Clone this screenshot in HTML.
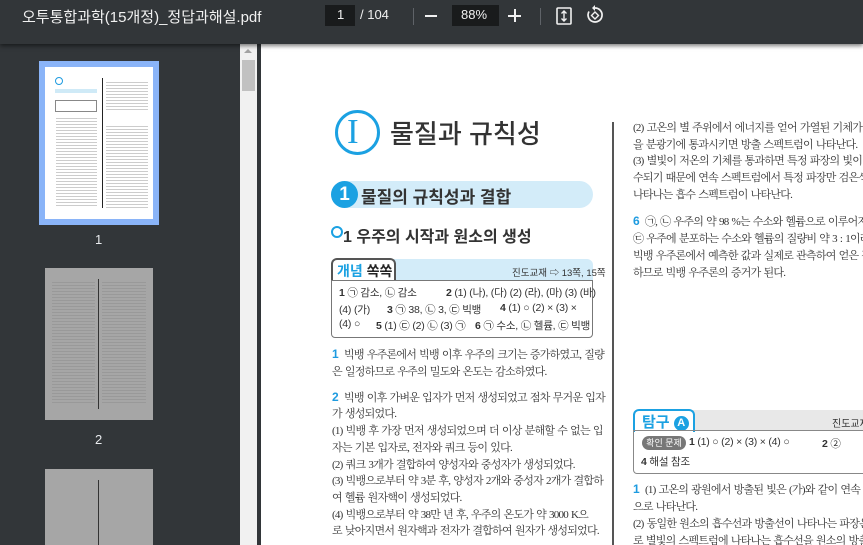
<!DOCTYPE html>
<html><head><meta charset="utf-8"><style>
*{margin:0;padding:0;box-sizing:border-box}
html,body{width:863px;height:545px;overflow:hidden}
body{background:#323639;font-family:"Liberation Sans","Noto Sans CJK KR",sans-serif;position:relative}
.a{position:absolute;white-space:nowrap}
#tb{position:absolute;left:0;top:0;width:863px;height:44px;background:#323639;box-shadow:0 2px 4px rgba(0,0,0,.5);z-index:3;color:#f1f1f1}
.pg{position:absolute;left:261px;top:44px;width:602px;height:501px;background:#fff}
.s{font-family:"Liberation Serif","Noto Serif CJK KR",serif;font-size:11px;color:#333;letter-spacing:-0.75px;word-spacing:1px}
.b{color:#1e9be0;font-family:"Liberation Sans","Noto Sans CJK KR",sans-serif;font-weight:bold;font-size:12px}
.k{font-family:"Liberation Sans","Noto Sans CJK KR",sans-serif;font-size:10.5px;color:#333;letter-spacing:-0.2px}
.thumb{position:absolute;background:#a6a6a6}
</style></head><body>
<div id="tb">
<div class="a" style="left:22px;top:6px;font-size:15px">오투통합과학(15개정)_정답과해설.pdf</div>
<div class="a" style="left:325px;top:5px;width:30px;height:21px;background:#191b1c"></div>
<div class="a" style="left:337px;top:7px;font-size:13px">1</div>
<div class="a" style="left:360px;top:7px;font-size:13px">/ 104</div>
<div class="a" style="left:413px;top:8px;width:1px;height:17px;background:#5f6368"></div>
<div class="a" style="left:425px;top:15px;width:12px;height:2px;background:#f1f1f1"></div>
<div class="a" style="left:452px;top:5px;width:47px;height:21px;background:#191b1c"></div>
<div class="a" style="left:461px;top:7px;font-size:13px">88%</div>
<div class="a" style="left:508px;top:15px;width:13px;height:2px;background:#f1f1f1"></div>
<div class="a" style="left:514px;top:9px;width:2px;height:13px;background:#f1f1f1"></div>
<div class="a" style="left:540px;top:8px;width:1px;height:17px;background:#5f6368"></div>
<svg class="a" style="left:555px;top:6px" width="18" height="20" viewBox="0 0 18 20"><rect x="2" y="2" width="14" height="16" fill="none" stroke="#f1f1f1" stroke-width="1.6" rx="1"/><path d="M9 5v10M6.5 7.5L9 5l2.5 2.5M6.5 12.5L9 15l2.5-2.5" stroke="#f1f1f1" stroke-width="1.4" fill="none"/></svg>
<svg class="a" style="left:585px;top:5px" width="20" height="20" viewBox="0 0 20 20"><path d="M10 3a7 7 0 1 1-6 3.5" stroke="#f1f1f1" stroke-width="1.7" fill="none"/><path d="M10 0v6l-3-3z" fill="#f1f1f1"/><path d="M10 7l3.5 3.5L10 14l-3.5-3.5z" stroke="#f1f1f1" stroke-width="1.4" fill="none"/></svg>
</div>
<div class="a" style="left:39px;top:61px;width:120px;height:164px;background:#8ab4f8"></div>
<div class="a" style="left:45px;top:67px;width:108px;height:152px;background:#fff"></div>
<div class="a" style="left:55px;top:77px;width:8px;height:8px;border:1.5px solid #1e9be0;border-radius:50%"></div>
<div class="a" style="left:55px;top:89px;width:42px;height:4px;background:#cfeaf7"></div>
<div class="a" style="left:55px;top:100px;width:42px;height:12px;border:1px solid #888"></div>
<div class="a" style="left:102px;top:78px;width:1px;height:130px;background:#222"></div>
<div class="a" style="left:56px;top:116px;width:41px;height:92px;background:repeating-linear-gradient(#fff 0 2px,#ccc 2px 3px)"></div>
<div class="a" style="left:106px;top:80px;width:42px;height:30px;background:repeating-linear-gradient(#fff 0 2px,#ccc 2px 3px)"></div>
<div class="a" style="left:106px;top:124px;width:42px;height:84px;background:repeating-linear-gradient(#fff 0 2px,#ccc 2px 3px)"></div>
<div class="a" style="left:95px;top:232px;color:#e8eaed;font-size:13px">1</div>
<div class="thumb" style="left:45px;top:268px;width:108px;height:152px"></div>
<div class="a" style="left:98px;top:279px;width:1px;height:130px;background:#333"></div>
<div class="a" style="left:52px;top:280px;width:43px;height:125px;background:repeating-linear-gradient(#a6a6a6 0 2px,#999 2px 3px)"></div>
<div class="a" style="left:102px;top:280px;width:44px;height:125px;background:repeating-linear-gradient(#a6a6a6 0 2px,#999 2px 3px)"></div>
<div class="a" style="left:95px;top:432px;color:#e8eaed;font-size:13px">2</div>
<div class="thumb" style="left:45px;top:469px;width:108px;height:80px"></div>
<div class="a" style="left:98px;top:480px;width:1px;height:70px;background:#333"></div>
<div class="a" style="left:240px;top:44px;width:17px;height:501px;background:#f1f1f1"></div>
<div class="a" style="left:242px;top:60px;width:13px;height:31px;background:#c1c1c1"></div>
<div class="a" style="left:244px;top:49px;width:0;height:0;border-left:4px solid transparent;border-right:4px solid transparent;border-bottom:4px solid #a3a3a3"></div>
<div class="pg"></div>
<div class="a" style="left:612px;top:122px;width:2px;height:423px;background:#555"></div>
<div class="a" style="left:335px;top:110px;width:45px;height:45px;border:3px solid #1ba1e2;border-radius:50%"></div>
<div class="a" style="left:347px;top:112px;font-family:'Liberation Serif',serif;font-size:35px;color:#1ba1e2">I</div>
<div class="a" style="left:390px;top:114px;font-size:26px;color:#333;font-weight:500">물질과 규칙성</div>
<div class="a" style="left:331px;top:181px;width:262px;height:27px;background:#d3ecf9;border-radius:14px"></div>
<div class="a" style="left:331px;top:181px;width:27px;height:27px;background:#1ba1e2;border-radius:50%;color:#fff;font-size:19px;font-weight:bold;text-align:center;line-height:27px">1</div>
<div class="a" style="left:361px;top:183px;font-size:17px;font-weight:bold;color:#333">물질의 규칙성과 결합</div>
<div class="a" style="left:331px;top:226px;width:12px;height:12px;border:2.5px solid #1ba1e2;border-radius:50%"></div>
<div class="a" style="left:343px;top:223px;font-size:16px;font-weight:bold;color:#333">1 우주의 시작과 원소의 생성</div>
<div class="a" style="left:331px;top:259px;width:262px;height:22px;background:#d3ecf9;border-radius:6px 6px 0 0"></div>
<div class="a" style="left:331px;top:258px;width:65px;height:24px;background:#fff;border:2px solid #555;border-bottom:none;border-radius:6px 6px 0 0"></div>
<div class="a" style="left:337px;top:261px;font-size:14px;font-weight:bold"><span style="color:#1ba1e2">개념</span> <span style="color:#222">쏙쏙</span></div>
<div class="a" style="left:512px;top:265px;font-size:9.5px;color:#333">진도교재 ⇨ 13쪽, 15쪽</div>
<div class="a" style="left:331px;top:280px;width:262px;height:58px;border:1.5px solid #777;border-radius:0 0 4px 4px;background:#fff"></div>
<div class="a k" style="left:339px;top:285px"><b>1</b> ㉠ 감소, ㉡ 감소</div>
<div class="a k" style="left:446px;top:285px"><b>2</b> (1) (나), (다) (2) (라), (마) (3) (바)</div>
<div class="a k" style="left:339px;top:302px">(4) (가)</div>
<div class="a k" style="left:387px;top:302px"><b>3</b> ㉠ 38, ㉡ 3, ㉢ 빅뱅</div>
<div class="a k" style="left:500px;top:302px"><b>4</b> (1) ○ (2) × (3) ×</div>
<div class="a k" style="left:339px;top:318px">(4) ○</div>
<div class="a k" style="left:376px;top:318px"><b>5</b> (1) ㉢ (2) ㉡ (3) ㉠</div>
<div class="a k" style="left:475px;top:318px"><b>6</b> ㉠ 수소, ㉡ 헬륨, ㉢ 빅뱅</div>
<div class="a s" style="left:332px;top:346px"><span class="b">1</span>&nbsp; 빅뱅 우주론에서 빅뱅 이후 우주의 크기는 증가하였고, 질량</div>
<div class="a s" style="left:332px;top:363px">은 일정하므로 우주의 밀도와 온도는 감소하였다.</div>
<div class="a s" style="left:332px;top:389px"><span class="b">2</span>&nbsp; 빅뱅 이후 가벼운 입자가 먼저 생성되었고 점차 무거운 입자</div>
<div class="a s" style="left:332px;top:405px">가 생성되었다.</div>
<div class="a s" style="left:332px;top:422px">(1) 빅뱅 후 가장 먼저 생성되었으며 더 이상 분해할 수 없는 입</div>
<div class="a s" style="left:332px;top:439px">자는 기본 입자로, 전자와 쿼크 등이 있다.</div>
<div class="a s" style="left:332px;top:456px">(2) 쿼크 3개가 결합하여 양성자와 중성자가 생성되었다.</div>
<div class="a s" style="left:332px;top:472px">(3) 빅뱅으로부터 약 3분 후, 양성자 2개와 중성자 2개가 결합하</div>
<div class="a s" style="left:332px;top:489px">여 헬륨 원자핵이 생성되었다.</div>
<div class="a s" style="left:332px;top:506px">(4) 빅뱅으로부터 약 38만 년 후, 우주의 온도가 약 3000 K으</div>
<div class="a s" style="left:332px;top:522px">로 낮아지면서 원자핵과 전자가 결합하여 원자가 생성되었다.</div>
<div class="a s" style="left:633px;top:119px">(2) 고온의 별 주위에서 에너지를 얻어 가열된 기체가 방</div>
<div class="a s" style="left:633px;top:136px">을 분광기에 통과시키면 방출 스펙트럼이 나타난다.</div>
<div class="a s" style="left:633px;top:152px">(3) 별빛이 저온의 기체를 통과하면 특정 파장의 빛이 기</div>
<div class="a s" style="left:633px;top:169px">수되기 때문에 연속 스펙트럼에서 특정 파장만 검은색</div>
<div class="a s" style="left:633px;top:186px">나타나는 흡수 스펙트럼이 나타난다.</div>
<div class="a s" style="left:633px;top:213px"><span class="b">6</span>&nbsp; ㉠, ㉡ 우주의 약 98 %는 수소와 헬륨으로 이루어져</div>
<div class="a s" style="left:633px;top:230px">㉢ 우주에 분포하는 수소와 헬륨의 질량비 약 3 : 1이라</div>
<div class="a s" style="left:633px;top:247px">빅뱅 우주론에서 예측한 값과 실제로 관측하여 얻은 값</div>
<div class="a s" style="left:633px;top:264px">하므로 빅뱅 우주론의 증거가 된다.</div>
<div class="a" style="left:633px;top:410px;width:240px;height:21px;background:#e8e8e8;border-radius:6px 0 0 0"></div>
<div class="a" style="left:633px;top:409px;width:62px;height:23px;background:#fff;border:2px solid #1ba1e2;border-bottom:none;border-radius:6px 6px 0 0"></div>
<div class="a" style="left:642px;top:411px;font-size:15px;font-weight:bold;color:#1ba1e2">탐구 <span style="display:inline-block;width:15px;height:15px;border-radius:50%;background:#1ba1e2;color:#fff;font-size:11px;text-align:center;line-height:15px;vertical-align:1px">A</span></div>
<div class="a" style="left:832px;top:415px;font-size:10px;color:#333">진도교재</div>
<div class="a" style="left:633px;top:430px;width:240px;height:44px;border:1.5px solid #888;border-radius:0 0 4px 4px"></div>
<div class="a" style="left:642px;top:436px;width:44px;height:14px;background:#777;border-radius:7px;color:#fff;font-size:9px;text-align:center;line-height:14px">확인 문제</div>
<div class="a k" style="left:689px;top:436px"><b>1</b> (1) ○ (2) × (3) × (4) ○</div>
<div class="a k" style="left:822px;top:436px"><b>2</b> ②</div>
<div class="a k" style="left:641px;top:454px"><b>4</b> 해설 참조</div>
<div class="a s" style="left:633px;top:481px"><span class="b">1</span>&nbsp; (1) 고온의 광원에서 방출된 빛은 (가)와 같이 연속 스</div>
<div class="a s" style="left:633px;top:498px">으로 나타난다.</div>
<div class="a s" style="left:633px;top:515px">(2) 동일한 원소의 흡수선과 방출선이 나타나는 파장은</div>
<div class="a s" style="left:633px;top:532px">로 별빛의 스펙트럼에 나타나는 흡수선을 원소의 방출선</div>
</body></html>
